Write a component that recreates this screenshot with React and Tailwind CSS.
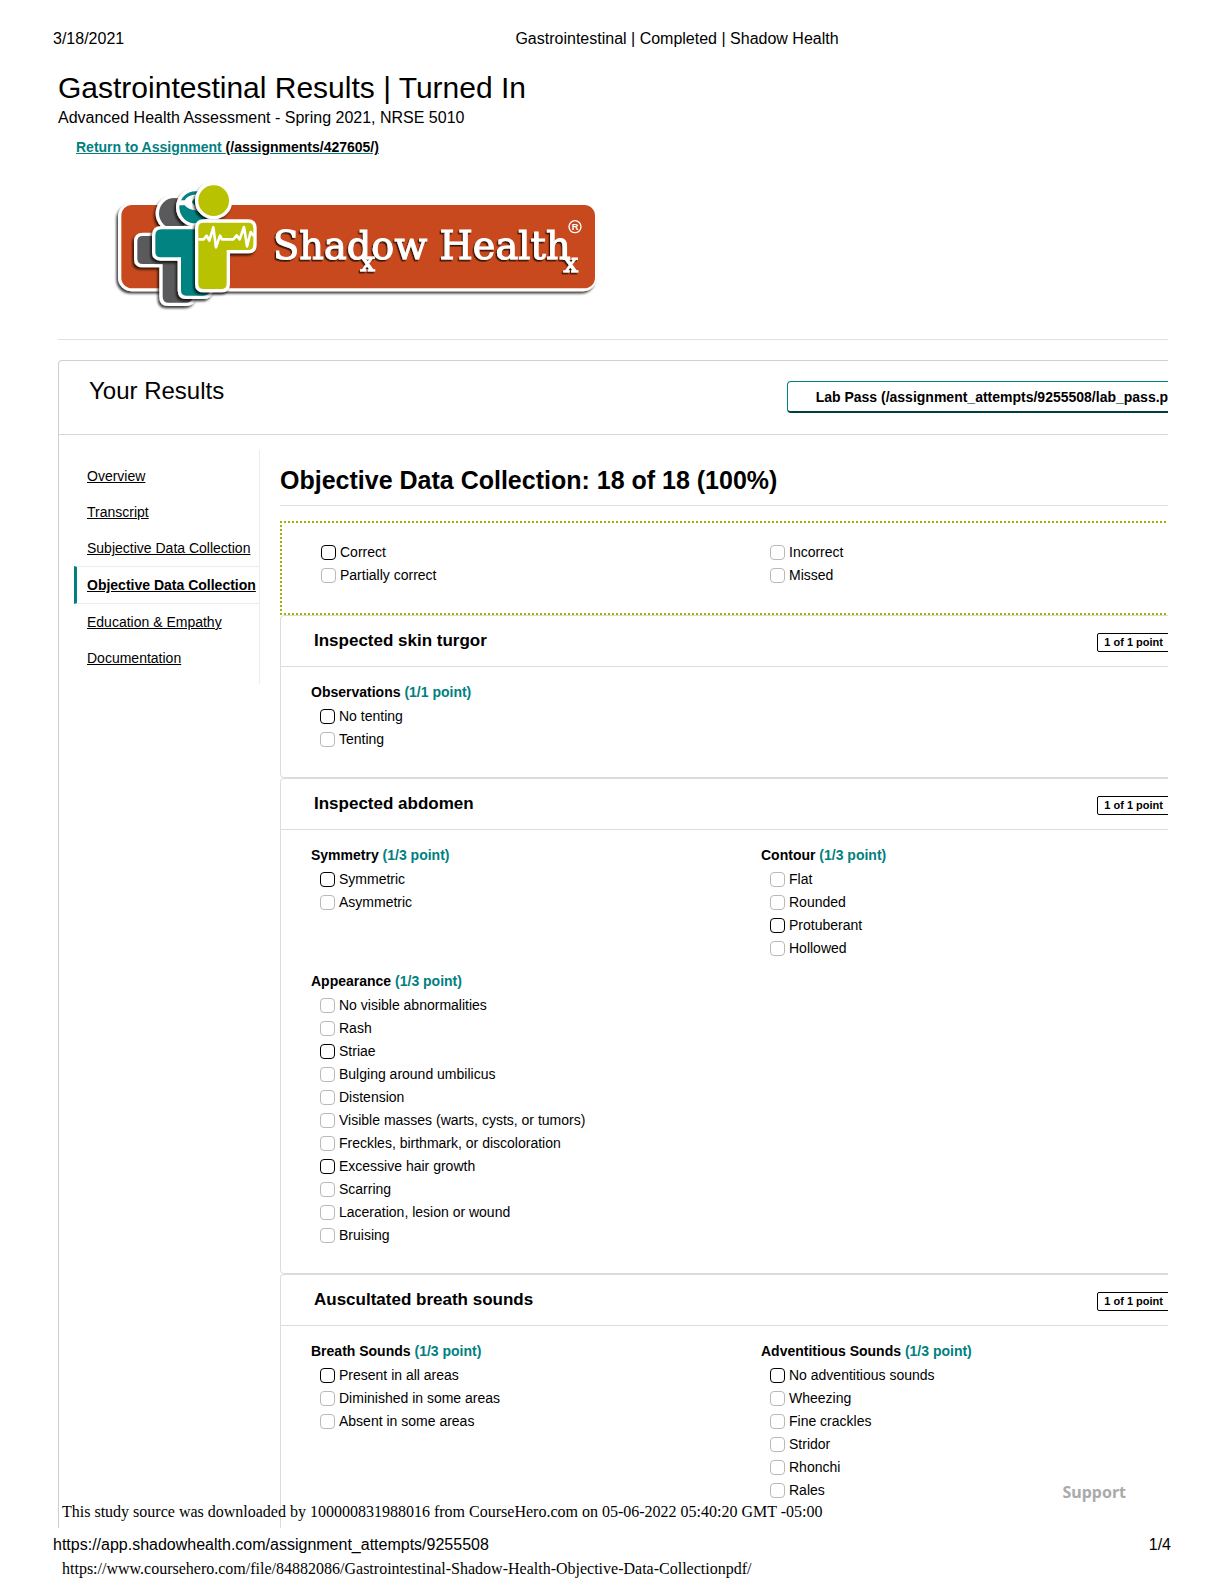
import { useId } from "react"

const navItems = [
    { name: "Overview" },
    { name: "Transcript" },
    { name: "Subjective Data Collection" },
    { name: "Objective Data Collection", active: true },
    { name: "Education & Empathy" },
    { name: "Documentation" },
]

const legend = [
    { name: "Correct", checked: true },
    { name: "Incorrect" },
    { name: "Partially correct" },
    { name: "Missed" },
]

const sections = [
    {
        title: "Inspected skin turgor",
        score: "1 of 1 point",
        groups: [
            {
                title: "Observations",
                point: "(1/1 point)",
                items: [{ name: "No tenting", checked: true }, { name: "Tenting" }],
            },
        ],
    },
    {
        title: "Inspected abdomen",
        score: "1 of 1 point",
        groups: [
            {
                title: "Symmetry",
                point: "(1/3 point)",
                items: [{ name: "Symmetric", checked: true }, { name: "Asymmetric" }],
            },
            {
                title: "Contour",
                point: "(1/3 point)",
                items: [
                    { name: "Flat" },
                    { name: "Rounded" },
                    { name: "Protuberant", checked: true },
                    { name: "Hollowed" },
                ],
            },
            {
                title: "Appearance",
                point: "(1/3 point)",
                items: [
                    { name: "No visible abnormalities" },
                    { name: "Rash" },
                    { name: "Striae", checked: true },
                    { name: "Bulging around umbilicus" },
                    { name: "Distension" },
                    { name: "Visible masses (warts, cysts, or tumors)" },
                    { name: "Freckles, birthmark, or discoloration" },
                    { name: "Excessive hair growth", checked: true },
                    { name: "Scarring" },
                    { name: "Laceration, lesion or wound" },
                    { name: "Bruising" },
                ],
            },
        ],
    },
    {
        title: "Auscultated breath sounds",
        score: "1 of 1 point",
        groups: [
            {
                title: "Breath Sounds",
                point: "(1/3 point)",
                items: [
                    { name: "Present in all areas", checked: true },
                    { name: "Diminished in some areas" },
                    { name: "Absent in some areas" },
                ],
            },
            {
                title: "Adventitious Sounds",
                point: "(1/3 point)",
                items: [
                    { name: "No adventitious sounds", checked: true },
                    { name: "Wheezing" },
                    { name: "Fine crackles" },
                    { name: "Stridor" },
                    { name: "Rhonchi" },
                    { name: "Rales" },
                ],
            },
        ],
    },
]

function Logo() {
    return (
        <svg width="500" height="150" viewBox="0 0 1500 450" role="img" aria-label="Shadow Health">
            <defs>
                <filter id="shade" x="-10%" y="-10%" width="120%" height="120%">
                    <feDropShadow dx="-5" dy="7" stdDeviation="3" floodColor="#000" floodOpacity="0.75" />
                </filter>
                <filter id="textShade" x="-10%" y="-20%" width="120%" height="150%">
                    <feDropShadow dx="-4" dy="5" stdDeviation="2" floodColor="#2a0a00" floodOpacity="0.9" />
                </filter>
            </defs>
            <rect x="54" y="98" width="1436" height="266" rx="42" fill="#fff" filter="url(#shade)" />
            <rect x="64" y="105" width="1421" height="250" rx="32" fill="#c8491d" />
            {/* gray figure */}
            <g fill="#5a5a5c" stroke="#fff" strokeWidth="20" paintOrder="stroke" filter="url(#shade)">
                <circle cx="223" cy="130" r="46" />
                <path d="M128 198H280V380Q276 398 256 398H206Q188 398 188 380V282H128Q112 282 112 266V214Q112 198 128 198Z" />
            </g>
            {/* teal figure */}
            <g fill="#008381" stroke="#fff" strokeWidth="20" paintOrder="stroke" filter="url(#shade)">
                <circle cx="286" cy="112" r="48" />
                <path d="M184 178H330V363Q326 377 310 377H258Q243 377 243 361V262H182Q166 262 166 246V196Q166 178 184 178Z" />
            </g>
            <path d="M236 91H254Q262 76 290 73V84Q278 87 276 96Q279 106 294 108V122Q264 120 254 106H236Z" fill="#fff" />
            {/* lime figure */}
            <g fill="#b8c200" stroke="#fff" strokeWidth="20" paintOrder="stroke" filter="url(#shade)">
                <circle cx="341" cy="92" r="46" />
                <path d="M311 158H444Q460 158 460 174V224Q460 240 444 240H380V341Q380 357 364 357H311Q295 357 295 341V174Q295 158 311 158Z" />
            </g>
            <path
                d="M295 208H311L320 197L328 212L340 172L348 232L360 197L366 208H400L410 196L419 208L432 171L441 229L452 186L461 198"
                fill="none"
                stroke="#fff"
                strokeWidth="8"
                strokeLinejoin="round"
            />
            <g fill="#fff" stroke="#fff" strokeWidth="3" fontFamily="'DejaVu Serif', serif" filter="url(#textShade)">
                <text x="519" y="266" fontSize="115">
                    Shadow Health
                </text>
                <text x="780" y="302" fontSize="80">
                    x
                </text>
                <text x="1390" y="305" fontSize="80">
                    x
                </text>
            </g>
            <circle cx="1425" cy="170" r="18" fill="none" stroke="#fff" strokeWidth="4" />
            <text x="1425" y="180" fontSize="28" fontWeight="700" textAnchor="middle" fill="#fff" fontFamily="'Liberation Sans', sans-serif">
                R
            </text>
        </svg>
    )
}

function CheckItem({ name, checked }) {
    const id = useId()
    return (
        <div className="flex h-[23px] items-center gap-1 pl-[9px]">
            <input
                id={id}
                type="checkbox"
                defaultChecked={checked}
                className="size-[15px] appearance-none rounded-sm border border-[#b9b9b9] checked:border-black"
            />
            <label htmlFor={id} className="whitespace-nowrap leading-[23px]">
                {name}
            </label>
        </div>
    )
}

function Group({ group }) {
    return (
        <div>
            <h4 className="pb-px font-bold leading-6">
                {group.title} <span className="text-[#008080]">{group.point}</span>
            </h4>
            {group.items.map((item) => (
                <CheckItem key={item.name} name={item.name} checked={item.checked} />
            ))}
        </div>
    )
}

function Section({ section, last }) {
    return (
        <section className={last ? "rounded-t border border-b-0 border-[#dcdcdc]" : "rounded border border-[#dcdcdc]"}>
            <div className="flex h-[51px] items-center justify-between border-b border-[#dcdcdc] pl-[33px] pr-[71px]">
                <h3 className="text-[17px] font-bold">{section.title}</h3>
                <span className="mt-0.5 h-[19px] rounded-xs border border-black px-1.5 text-[11px] font-bold leading-[17px]">
                    {section.score}
                </span>
            </div>
            <div className="grid grid-cols-2 gap-y-[9px] px-[30px] pt-[13px] pb-[26px]">
                {section.groups.map((group) => (
                    <Group key={group.title} group={group} />
                ))}
            </div>
        </section>
    )
}

function App() {
    return (
        <div className="bg-white font-['Liberation_Sans',Arial,sans-serif] text-sm text-black">
            <div className="grid grid-cols-[1fr_auto_1fr] px-[53px] pt-[27px] text-base leading-6">
                <span>3/18/2021</span>
                <span className="pl-[130px]">Gastrointestinal | Completed | Shadow Health</span>
                <span></span>
            </div>

            <div className="pl-[58px] pr-14">
                <header className="border-b border-[#e0e0d4]">
                    <h1 className="pt-[19px] text-[30px] leading-9">Gastrointestinal Results | Turned In</h1>
                    <p className="text-base leading-6">Advanced Health Assessment - Spring 2021, NRSE 5010</p>
                    <a href="#assignment" className="ml-[18px] block w-fit font-bold leading-[34px] text-[#008080] underline">
                        Return to Assignment <span className="text-black">(/assignments/427605/)</span>
                    </a>
                    <div className="ml-[42px] pt-1.5 pb-[19px]">
                        <Logo />
                    </div>
                </header>

                <main className="relative mt-5 overflow-hidden">
                    <div className="w-[calc(100%+74px)] rounded-t-sm border-t border-l border-[#cfcfcf]">
                        <div className="flex h-[74px] items-start justify-between border-b border-[#d6d6d6] pl-[30px] pr-[27px]">
                            <h2 className="pt-3 text-2xl leading-9">Your Results</h2>
                            <a
                                href="#lab-pass"
                                className="mt-5 h-8 rounded border border-b-2 border-[#008080] border-b-[#003f3f] px-7 font-bold leading-[31px]"
                            >
                                Lab Pass (/assignment_attempts/9255508/lab_pass.pdf)
                            </a>
                        </div>

                        <div className="flex">
                            <nav className="mt-[15px] ml-[15px] w-[186px] shrink-0 self-start border-r border-[#ececec] py-2">
                                {navItems.map((item) => (
                                    <a
                                        key={item.name}
                                        href="#results"
                                        className={
                                            item.active
                                                ? "block whitespace-nowrap border-y border-l-3 border-y-[#ececec] border-l-[#008080] pl-2.5 font-bold leading-9 underline"
                                                : "block whitespace-nowrap pl-[13px] leading-9 underline"
                                        }
                                    >
                                        {item.name}
                                    </a>
                                ))}
                            </nav>

                            <div className="ml-5 grow pt-[25px]">
                                <h2 className="border-b border-[#e0e0e0] pb-[5px] text-[25px] font-bold leading-10">
                                    Objective Data Collection: 18 of 18 (100%)
                                </h2>
                                <div className="mt-[15px] grid grid-cols-2 border-2 border-dotted border-[#a6b000] px-[30px] pt-[18px] pb-[26px]">
                                    {legend.map((item) => (
                                        <CheckItem key={item.name} name={item.name} checked={item.checked} />
                                    ))}
                                </div>
                                {sections.map((section, index) => (
                                    <Section
                                        key={section.title}
                                        section={section}
                                        last={index === sections.length - 1}
                                    />
                                ))}
                            </div>
                        </div>
                    </div>

                    {/* support button and download stamp float over the results */}
                    <button className="absolute right-[42px] bottom-6 font-['Noto_Sans',sans-serif] text-base font-bold leading-6 text-[#aaaaaa]">
                        Support
                    </button>
                    <p className="absolute bottom-1 left-1 whitespace-nowrap font-['Liberation_Serif',serif] text-base leading-6">
                        This study source was downloaded by 100000831988016 from CourseHero.com on 05-06-2022 05:40:20 GMT -05:00
                    </p>
                </main>
            </div>

            <footer className="px-[53px] pt-[5px] text-base leading-6">
                <div className="flex justify-between">
                    <span>https://app.shadowhealth.com/assignment_attempts/9255508</span>
                    <span>1/4</span>
                </div>
                <a href="#file" className="ml-[9px] block w-fit font-['Liberation_Serif',serif]">
                    https://www.coursehero.com/file/84882086/Gastrointestinal-Shadow-Health-Objective-Data-Collectionpdf/
                </a>
            </footer>
        </div>
    )
}

export default App
